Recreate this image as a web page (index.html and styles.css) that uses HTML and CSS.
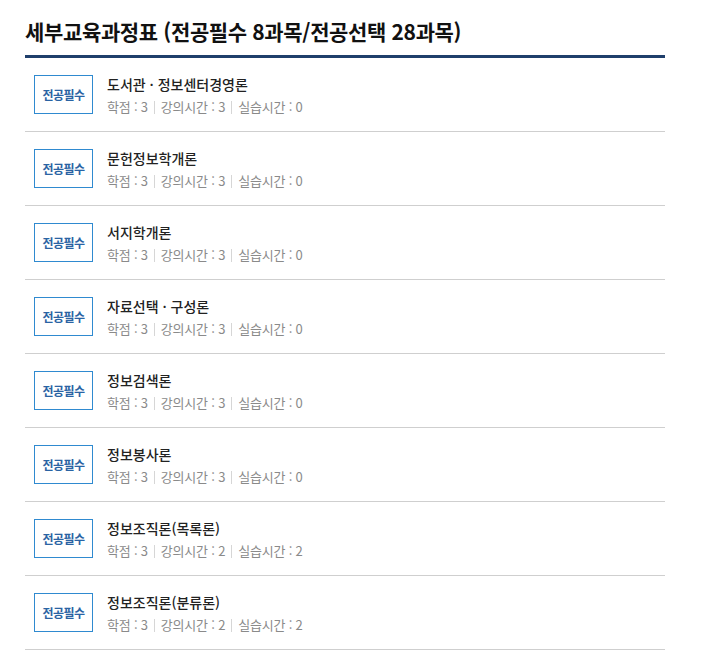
FILE: index.html
```html
<!DOCTYPE html>
<html lang="ko">
<head>
<meta charset="utf-8">
<link rel="stylesheet" href="styles.css">
</head>
<body>
<div class="wrap">
  <h2 class="title">세부교육과정표 (전공필수 8과목/전공선택 28과목)</h2>
  <ul class="list">
    <li class="row"><span class="badge">전공필수</span><div class="info"><p class="name">도서관 · 정보센터경영론</p><p class="meta"><span>학점 : 3</span><span>강의시간 : 3</span><span>실습시간 : 0</span></p></div></li>
    <li class="row"><span class="badge">전공필수</span><div class="info"><p class="name">문헌정보학개론</p><p class="meta"><span>학점 : 3</span><span>강의시간 : 3</span><span>실습시간 : 0</span></p></div></li>
    <li class="row"><span class="badge">전공필수</span><div class="info"><p class="name">서지학개론</p><p class="meta"><span>학점 : 3</span><span>강의시간 : 3</span><span>실습시간 : 0</span></p></div></li>
    <li class="row"><span class="badge">전공필수</span><div class="info"><p class="name">자료선택 · 구성론</p><p class="meta"><span>학점 : 3</span><span>강의시간 : 3</span><span>실습시간 : 0</span></p></div></li>
    <li class="row"><span class="badge">전공필수</span><div class="info"><p class="name">정보검색론</p><p class="meta"><span>학점 : 3</span><span>강의시간 : 3</span><span>실습시간 : 0</span></p></div></li>
    <li class="row"><span class="badge">전공필수</span><div class="info"><p class="name">정보봉사론</p><p class="meta"><span>학점 : 3</span><span>강의시간 : 3</span><span>실습시간 : 0</span></p></div></li>
    <li class="row"><span class="badge">전공필수</span><div class="info"><p class="name">정보조직론(목록론)</p><p class="meta"><span>학점 : 3</span><span>강의시간 : 2</span><span>실습시간 : 2</span></p></div></li>
    <li class="row"><span class="badge">전공필수</span><div class="info"><p class="name">정보조직론(분류론)</p><p class="meta"><span>학점 : 3</span><span>강의시간 : 2</span><span>실습시간 : 2</span></p></div></li>
  </ul>
</div>
</body>
</html>
```
FILE: styles.css
```css
html, body {
  margin: 0;
  padding: 0;
  background: #fff;
}
body {
  font-family: "Noto Sans CJK KR", "Noto Sans", sans-serif;
  color: #222;
}
.wrap {
  width: 640px;
  margin-left: 25px;
  padding-top: 16px;
}
.title {
  margin: 0;
  font-size: 21px;
  font-weight: 700;
  letter-spacing: -0.35px;
  line-height: 30px;
  color: #111;
  padding-bottom: 9px;
  border-bottom: 3px solid #1f3f6b;
}
.list {
  list-style: none;
  margin: 0;
  padding: 0;
}
.row {
  display: flex;
  align-items: center;
  gap: 14px;
  height: 39px;
  padding: 17px 0 17px 9px;
  border-bottom: 1px solid #cfcfcf;
}
.badge {
  box-sizing: border-box;
  width: 59px;
  height: 39px;
  border: 1px solid #2f8ad0;
  display: flex;
  align-items: center;
  justify-content: center;
  font-size: 12px;
  font-weight: 700;
  color: #2a63a3;
  letter-spacing: -0.5px;
  flex: none;
}
.info {
  display: flex;
  flex-direction: column;
  gap: 6px;
}
.name {
  margin: 0;
  font-size: 14px;
  font-weight: 500;
  line-height: 18px;
  color: #222;
  letter-spacing: 0;
}
.meta {
  margin: 0;
  font-size: 13px;
  line-height: 16px;
  color: #8a8a8a;
  display: flex;
  letter-spacing: -0.2px;
}
.meta span + span::before {
  content: "";
  display: inline-block;
  width: 1px;
  height: 13px;
  background: #d6d6d6;
  margin: 0 6px;
  vertical-align: -2px;
}
```
